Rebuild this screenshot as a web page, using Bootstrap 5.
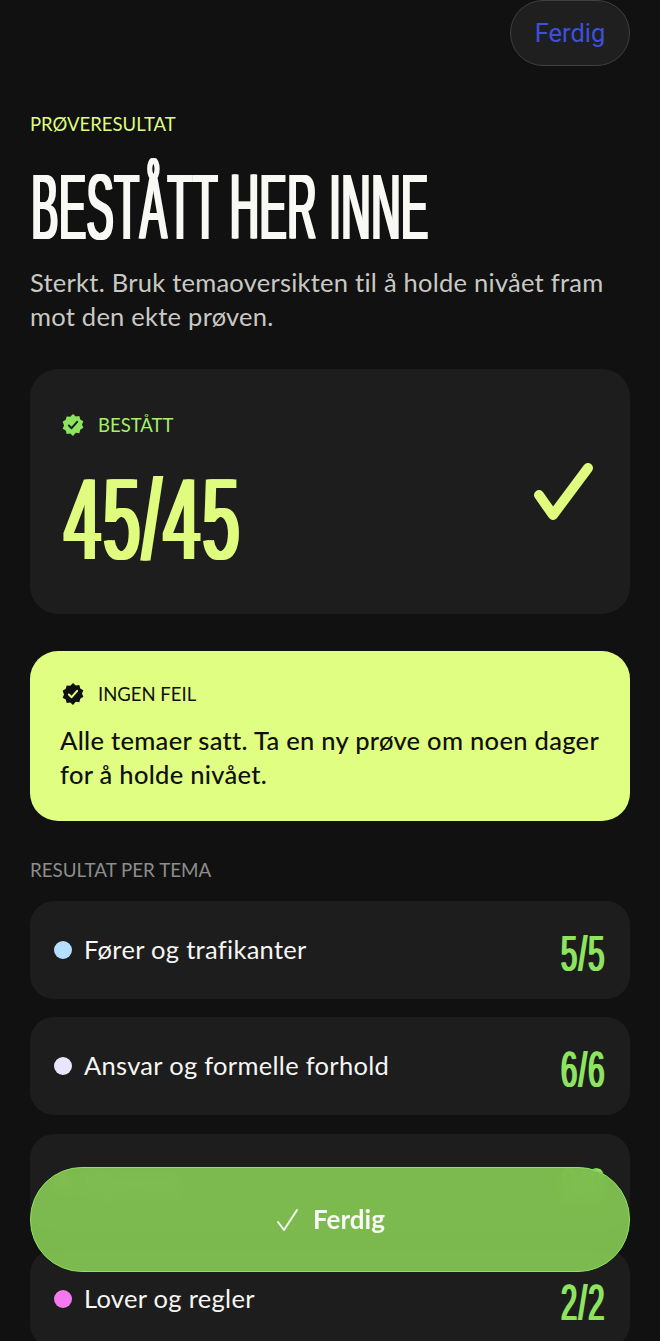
<!DOCTYPE html>
<html lang="no">
<head>
    <meta charset="UTF-8">
    <meta name="viewport" content="width=device-width, initial-scale=1.0">
    <title>Prøveresultat</title>
    <link href="https://cdn.jsdelivr.net/npm/bootstrap@5.3.0/dist/css/bootstrap.min.css" rel="stylesheet">
    <style>
        html, body { height: 1341px; overflow: hidden; }
        body { background: #111112; font-family: "Lato", "Liberation Sans", sans-serif; color: #f6f6f2; }
        .page-wrap { padding: 0 30px; }
        .top-bar { height: 66px; }
        .done-pill { width: 120px; height: 66px; border-radius: 33px; background: #1f1f20; border: 1px solid #3f3f41; color: #3d50dc; font-family: "Roboto", sans-serif; font-size: 25.5px; }
        .kicker { font-size: 18.5px; line-height: 24px; color: #dffc7f; margin-top: 46px; }
        /* no condensed font here: narrow size stretched upward, shadows thicken the stems */
        .tall-text { display: inline-block; font-family: "Liberation Sans", sans-serif; font-weight: 400; transform-origin: left center; white-space: nowrap; }
        .page-title { font-size: 40px; letter-spacing: 1px; line-height: 100px; height: 100px; margin: 20px 0 0; color: #f8f8f4; }
        .page-title .tall-text { transform: scaleY(2.3); text-shadow: 1.500px 0 0 currentColor, 3px 0 0 currentColor; }
        .intro { font-size: 25.5px; letter-spacing: .25px; line-height: 34px; color: #c9c9c4; margin: 9px 0 0; }
        .score-box { background: #1d1d1e; border-radius: 28px; height: 245px; margin-top: 36px; padding: 43px 32px 0; }
        .tag-line { font-size: 18.5px; line-height: 26px; gap: 14px; }
        .score-text { font-size: 65px; letter-spacing: 3px; line-height: 125px; height: 125px; color: #dffc7f; margin-top: 16px; }
        .score-text .tall-text { transform: scaleY(1.78); text-shadow: 2.500px 0 0 currentColor, 5px 0 0 currentColor; }
        .tick-mark { margin-top: 46px; }
        .lime-box { background: #dffe82; color: #101010; border-radius: 28px; height: 170px; margin-top: 37px; padding: 30px 30px 0; }
        .lime-box .tag-line { margin-left: 2px; }
        .lime-text { font-size: 25.5px; letter-spacing: .3px; line-height: 34px; margin: 16px 0 0; font-weight: 500; }
        .section-head { font-size: 18.8px; line-height: 24px; color: #8d8d8b; margin: 37px 0 19px; }
        .topic-row { background: #1d1d1e; border-radius: 24px; height: 98px; padding: 0 24px; margin-bottom: 18.300px; }
        .topic-dot { width: 18px; height: 18px; border-radius: 50%; }
        .topic-name { font-size: 25.5px; letter-spacing: .3px; line-height: 32px; margin: 0 0 2px 12px; }
        .topic-score { font-size: 29px; letter-spacing: 1.500px; line-height: 55px; color: #8ee35f; width: 46px; height: 55px; margin-top: 5px; }
        .topic-score .tall-text { transform: scaleY(1.69); text-shadow: 1px 0 0 currentColor, 2px 0 0 currentColor; }
        .save-btn { position: absolute; left: 30px; top: 1167px; width: 600px; height: 105px; border-radius: 52px; background: rgba(128, 192, 80, .96); backdrop-filter: blur(10px); border: 1px solid #8ee35f; color: #f8f8f4; font-size: 26px; font-weight: 700; gap: 12px; }
    </style>
</head>
<body>
    <div class="page-wrap">
        <div class="top-bar d-flex justify-content-end">
            <button class="done-pill d-flex align-items-center justify-content-center p-0" type="button">Ferdig</button>
        </div>

        <div class="kicker">PRØVERESULTAT</div>
        <h1 class="page-title"><span class="tall-text">BESTÅTT HER INNE</span></h1>
        <p class="intro">Sterkt. Bruk temaoversikten til å holde nivået fram mot den ekte prøven.</p>

        <div class="score-box d-flex justify-content-between">
            <div>
                <div class="tag-line d-flex align-items-center" style="color:#a5f069">
                    <svg width="22" height="22" viewBox="0 0 24 24"><path fill="#8ee35f" d="M12 0l3 2.600 3.900-.5 1 3.800 3.400 2-1.500 3.600 1.500 3.600-3.400 2-1 3.800-3.900-.5L12 24l-3-2.600-3.900.5-1-3.800-3.400-2 1.500-3.600L.7 8.400l3.400-2 1-3.800 3.900.5z"/><path fill="none" stroke="#1d1d1e" stroke-width="2.200" stroke-linecap="round" stroke-linejoin="round" d="M7.500 12.500l3 3 6-7"/></svg>
                    <span>BESTÅTT</span>
                </div>
                <div class="score-text"><span class="tall-text">45/45</span></div>
            </div>
            <svg class="tick-mark" width="64" height="64" viewBox="0 0 64 64"><path fill="none" stroke="#dffc7f" stroke-width="10" stroke-linecap="round" stroke-linejoin="round" d="M5 37l14 20L54 10"/></svg>
        </div>

        <div class="lime-box">
            <div class="tag-line d-flex align-items-center">
                <svg width="22" height="22" viewBox="0 0 24 24"><path fill="#101010" d="M12 0l3 2.600 3.900-.5 1 3.800 3.400 2-1.500 3.600 1.500 3.600-3.400 2-1 3.800-3.900-.5L12 24l-3-2.600-3.900.5-1-3.800-3.400-2 1.500-3.600L.7 8.400l3.400-2 1-3.800 3.900.5z"/><path fill="none" stroke="#dffe82" stroke-width="2.200" stroke-linecap="round" stroke-linejoin="round" d="M7.500 12.500l3 3 6-7"/></svg>
                <span>INGEN FEIL</span>
            </div>
            <p class="lime-text">Alle temaer satt. Ta en ny prøve om noen dager for å holde nivået.</p>
        </div>

        <div class="section-head">RESULTAT PER TEMA</div>

        <div class="topic-row d-flex align-items-center justify-content-between">
            <div class="d-flex align-items-center"><span class="topic-dot" style="background:#b5dfff"></span><span class="topic-name">Fører og trafikanter</span></div>
            <div class="topic-score"><span class="tall-text">5/5</span></div>
        </div>
        <div class="topic-row d-flex align-items-center justify-content-between">
            <div class="d-flex align-items-center"><span class="topic-dot" style="background:#e8e6ff"></span><span class="topic-name">Ansvar og formelle forhold</span></div>
            <div class="topic-score"><span class="tall-text">6/6</span></div>
        </div>
        <div class="topic-row d-flex align-items-center justify-content-between">
            <div class="d-flex align-items-center"><span class="topic-dot" style="background:#ffd37a"></span><span class="topic-name">Kjøretøy</span></div>
            <div class="topic-score"><span class="tall-text">8/8</span></div>
        </div>
        <div class="topic-row d-flex align-items-center justify-content-between">
            <div class="d-flex align-items-center"><span class="topic-dot" style="background:#f578f0"></span><span class="topic-name">Lover og regler</span></div>
            <div class="topic-score"><span class="tall-text">2/2</span></div>
        </div>
    </div>

    <button class="save-btn d-flex align-items-center justify-content-center" type="button">
        <svg width="26" height="26" viewBox="0 0 26 26"><path fill="none" stroke="#f8f8f4" stroke-width="2" stroke-linecap="round" stroke-linejoin="round" d="M3 15l6 8L22 3"/></svg>
        <span>Ferdig</span>
    </button>

    <script src="https://cdn.jsdelivr.net/npm/bootstrap@5.3.0/dist/js/bootstrap.bundle.min.js"></script>
</body>
</html>
